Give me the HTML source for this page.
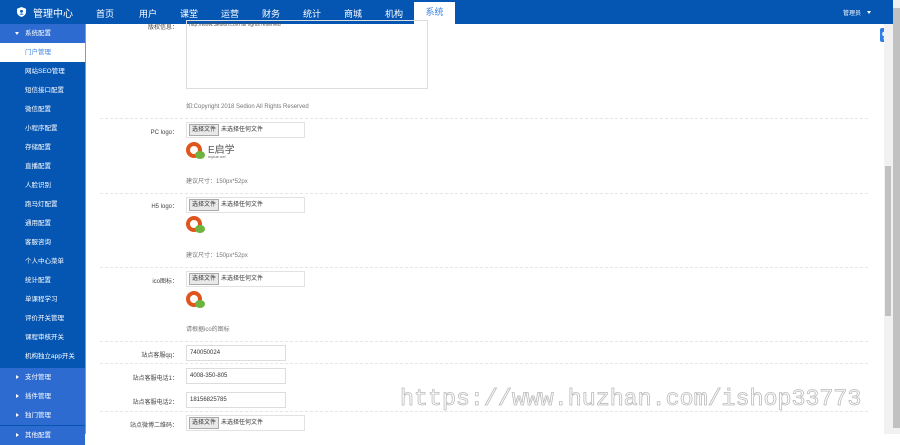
<!DOCTYPE html>
<html><head><meta charset="utf-8"><style>
*{margin:0;padding:0;box-sizing:border-box}
body{width:900px;height:434px;overflow:hidden;background:#fff;font-family:"Liberation Sans","Noto Sans CJK SC",sans-serif;position:relative}
.hdr{position:absolute;left:0;top:0;width:893px;height:24px;background:#0556b3;color:#fff}
.hdr .t{position:absolute;top:5px;font-size:10px}
.nav{position:absolute;top:7px;font-size:9px;color:#fff;width:40px;text-align:center}
.act{position:absolute;left:414px;top:2px;width:41px;height:22px;background:#fff;color:#3b82e0;font-size:9px;text-align:center;line-height:21px}
.sb{position:absolute;left:0;top:24px;width:85px;height:410px;background:#0556b3}
.it{position:absolute;left:0;width:85px;height:19px;color:#fff;font-size:6.5px;line-height:19px;padding-left:25px;white-space:nowrap}
.top{background:#2d6bd0;padding-left:25px}
.top:before{content:"";position:absolute;left:16px;top:7px;border-left:3px solid #fff;border-top:2.5px solid transparent;border-bottom:2.5px solid transparent}
.open:before{left:15px;top:8px;border-top:3px solid #fff;border-left:2.5px solid transparent;border-right:2.5px solid transparent;border-bottom:0}
.sel{background:#fff;color:#3b82e0}
.div{position:absolute;left:100px;width:768px;border-top:1px dashed #e6e6e6}
.lb{position:absolute;right:722px;font-size:6px;color:#444;white-space:nowrap}
.inp{position:absolute;left:186px;height:16px;border:1px solid #ddd;font-size:6px;color:#333;line-height:14px;padding-left:3px}
.file{position:absolute;left:186px;width:119px;height:16px;border:1px solid #e2e2e2;font-size:6px;color:#333;line-height:14px;white-space:nowrap}
.file b{display:inline-block;font-weight:normal;background:#e9e9e9;border:1px solid #aaa;margin:1px 2px;padding:0 2px;line-height:10px;height:12px}
.hint{position:absolute;left:186px;font-size:6px;color:#777}
.wm{position:absolute;left:400px;top:386px;font-family:"Liberation Mono",monospace;font-size:23.3px;color:#fff;-webkit-text-stroke:0.8px #bbb;white-space:nowrap}
</style></head><body>
<div class="hdr">
<svg style="position:absolute;left:17px;top:7px" width="9" height="10" viewBox="0 0 9 10"><path d="M4.5 0L9 1.8V5C9 7.5 6.8 9.3 4.5 10 2.2 9.3 0 7.5 0 5V1.8Z" fill="#fff"/><circle cx="4.5" cy="4.3" r="1.4" fill="#0556b3"/><path d="M2.3 7.6Q4.5 5.3 6.7 7.6" fill="#0556b3"/></svg>
<span class="t" style="left:33px">管理中心</span>
<span class="nav" style="left:85px">首页</span><span class="nav" style="left:128px">用户</span><span class="nav" style="left:169px">课堂</span><span class="nav" style="left:210px">运营</span><span class="nav" style="left:251px">财务</span><span class="nav" style="left:292px">统计</span><span class="nav" style="left:333px">商城</span><span class="nav" style="left:374px">机构</span>
<div class="act">系统</div>
<span style="position:absolute;left:843px;top:8px;font-size:6px">管理员</span>
<span style="position:absolute;left:867px;top:11px;border-top:3px solid #fff;border-left:2.5px solid transparent;border-right:2.5px solid transparent"></span>
</div>
<div class="sb">
<div class="it top open" style="top:0">系统配置</div>
<div class="it sel" style="top:19px">门户管理</div>
<div class="it" style="top:38px">网站SEO管理</div>
<div class="it" style="top:57px">短信接口配置</div>
<div class="it" style="top:76px">微信配置</div>
<div class="it" style="top:95px">小程序配置</div>
<div class="it" style="top:114px">存储配置</div>
<div class="it" style="top:133px">直播配置</div>
<div class="it" style="top:152px">人脸识别</div>
<div class="it" style="top:171px">跑马灯配置</div>
<div class="it" style="top:190px">通用配置</div>
<div class="it" style="top:209px">客服咨询</div>
<div class="it" style="top:228px">个人中心菜单</div>
<div class="it" style="top:247px">统计配置</div>
<div class="it" style="top:266px">单课程学习</div>
<div class="it" style="top:285px">评价开关管理</div>
<div class="it" style="top:304px">课程审核开关</div>
<div class="it" style="top:323px">机构独立app开关</div>
<div class="it top" style="top:344px">支付管理</div>
<div class="it top" style="top:363px">插件管理</div>
<div class="it top" style="top:382px">独门管理</div>
<div class="it top" style="top:402px">其他配置</div>
</div>
<div style="position:absolute;left:85px;top:24px;width:1px;height:410px;background:#6aa0e0"></div>

<span class="lb" style="top:22px">版权信息：</span>
<div style="position:absolute;left:186px;top:20px;width:242px;height:69px;border:1px solid #ddd"></div>
<span style="position:absolute;left:189px;top:22px;font-size:5px;color:#555">http://www.Sedion.com all rights reserved</span>
<span class="hint" style="top:101px">如:Copyright 2018 Sedion All Rights Reserved</span>
<div class="div" style="top:118px"></div>

<span class="lb" style="top:127px">PC logo：</span>
<div class="file" style="top:122px"><b>选择文件</b>未选择任何文件</div>
<svg style="position:absolute;left:186px;top:141px" width="20" height="20" viewBox="0 0 20 20"><circle cx="8" cy="9" r="6" fill="none" stroke="#e0551c" stroke-width="4"/><ellipse cx="14" cy="14" rx="5" ry="4" fill="#6db33f"/></svg>
<span style="position:absolute;left:208px;top:141px;font-size:10px;color:#555">E启学</span>
<span style="position:absolute;left:208px;top:154px;font-size:4px;color:#666">eqxue.net</span>
<span class="hint" style="top:176px">建议尺寸：150px*52px</span>
<div class="div" style="top:193px"></div>

<span class="lb" style="top:201px">H5 logo：</span>
<div class="file" style="top:197px"><b>选择文件</b>未选择任何文件</div>
<svg style="position:absolute;left:186px;top:216px" width="20" height="20" viewBox="0 0 20 20"><circle cx="8" cy="8" r="6" fill="none" stroke="#e0551c" stroke-width="4"/><ellipse cx="14" cy="13" rx="5" ry="4" fill="#6db33f"/></svg>
<span class="hint" style="top:250px">建议尺寸：150px*52px</span>
<div class="div" style="top:267px"></div>

<span class="lb" style="top:276px">ico图标：</span>
<div class="file" style="top:271px"><b>选择文件</b>未选择任何文件</div>
<svg style="position:absolute;left:186px;top:291px" width="20" height="20" viewBox="0 0 20 20"><circle cx="8" cy="8" r="6" fill="none" stroke="#e0551c" stroke-width="4"/><ellipse cx="14" cy="13" rx="5" ry="4" fill="#6db33f"/></svg>
<span class="hint" style="top:324px">请根据ico的图标</span>
<div class="div" style="top:341px"></div>

<span class="lb" style="top:350px">站点客服qq：</span>
<div class="inp" style="top:345px;width:100px">740050024</div>
<div class="div" style="top:363px"></div>
<span class="lb" style="top:373px">站点客服电话1：</span>
<div class="inp" style="top:368px;width:100px">4008-350-805</div>
<span class="lb" style="top:397px">站点客服电话2：</span>
<div class="inp" style="top:392px;width:100px">18156825785</div>
<div class="div" style="top:411px"></div>
<span class="lb" style="top:420px">站点微博二维码：</span>
<div class="file" style="top:415px"><b>选择文件</b>未选择任何文件</div>

<div class="wm">https://www.huzhan.com/ishop33773</div>

<div style="position:absolute;left:880px;top:28px;width:13px;height:14px;background:#2f7de8;border-radius:2px;overflow:hidden">
<svg width="13" height="14" viewBox="0 0 13 14"><path d="M9.5 4.5H4.5Q3 4.5 3 6T4.5 7.5H8.5Q10 7.5 10 9T8.5 10.5H3.5" fill="none" stroke="#fff" stroke-width="1.6"/></svg></div>
<div style="position:absolute;left:884px;top:24px;width:9px;height:410px;background:#f1f1f1"></div>
<div style="position:absolute;left:885px;top:166px;width:6px;height:150px;background:#c1c1c1"></div>
<div style="position:absolute;left:893px;top:0;width:7px;height:434px;background:#f1f1f1"></div>
<div style="position:absolute;left:893px;top:8px;width:7px;height:420px;background:#c1c1c1"></div>
</body></html>
